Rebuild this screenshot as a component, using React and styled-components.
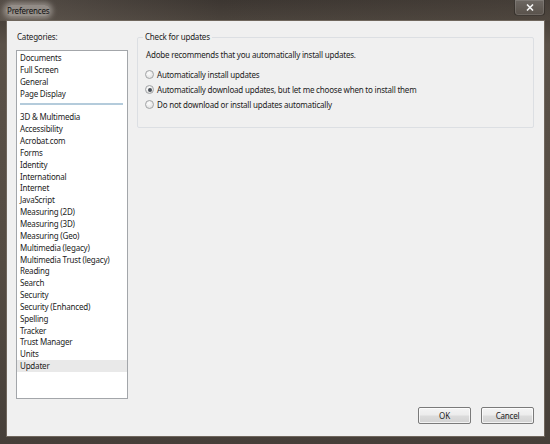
import styled, { createGlobalStyle } from "styled-components";

const GlobalStyle = createGlobalStyle`
  html, body {
    margin: 0;
    padding: 0;
    background: #3b3530;
  }
  * {
    box-sizing: border-box;
  }
`;

const uiFont = `"Noto Sans", "Open Sans", "DejaVu Sans", sans-serif`;

const Window = styled.div`
  width: 550px;
  height: 444px;
  display: flex;
  flex-direction: column;
  background: linear-gradient(to bottom, #3c3631 0%, #5a5148 10%, #544b42 60%, #463f39 100%);
  font-family: ${uiFont};
  font-size: 8px;
  letter-spacing: -0.2px;
  color: #1c1c1c;
`;

const TitleBar = styled.div`
  height: 21px;
  display: flex;
  align-items: flex-start;
  justify-content: space-between;
  padding: 0 5px 0 6px;
  background: linear-gradient(to right, rgba(130, 120, 110, 0.35), rgba(0, 0, 0, 0) 40%, rgba(90, 80, 70, 0.3));
`;

const Title = styled.div`
  margin-top: 5px;
  padding: 0 1px;
  line-height: 11px;
  color: #111;
  background: rgba(225, 220, 214, 0.45);
  border-radius: 6px;
  box-shadow: 0 0 5px 3px rgba(225, 220, 214, 0.4);
`;

const CloseButton = styled.div`
  width: 31px;
  height: 16px;
  display: flex;
  align-items: center;
  justify-content: center;
  border: 1px solid rgba(30, 25, 20, 0.6);
  border-top: none;
  border-radius: 0 0 4px 4px;
  background: linear-gradient(to bottom, rgba(255, 255, 255, 0.22), rgba(255, 255, 255, 0.08));
  box-shadow: inset 0 0 0 1px rgba(255, 255, 255, 0.12);
`;

const Client = styled.div`
  flex: 1;
  margin: 0 6px 8px 7px;
  display: flex;
  flex-direction: column;
  padding: 10px 10px 12px 9px;
  background: #f0f0f0;
  box-shadow: 0 0 0 1px #6f665d;
`;

const Body = styled.div`
  flex: 1;
  display: flex;
  gap: 9px;
  min-height: 0;
`;

const Sidebar = styled.div`
  width: 112px;
  display: flex;
  flex-direction: column;
`;

const Label = styled.div`
  line-height: 12px;
  padding-left: 1px;
  margin-bottom: 7px;
`;

const ListBox = styled.div`
  flex: 1;
  border: 1px solid #a3a6aa;
  background: #fff;
  padding: 1px 0;
`;

const Item = styled.div`
  height: 11.85px;
  line-height: 11.85px;
  padding-left: 3px;
  white-space: nowrap;
  background: ${(p) => (p.$selected ? "#e9e9e9" : "transparent")};
`;

const Separator = styled.div`
  height: 2px;
  margin: 4px 4px 6px 3px;
  background: #b4cbdb;
`;

const Main = styled.div`
  flex: 1;
`;

const Group = styled.fieldset`
  margin: 0;
  height: 97px;
  padding: 0 7px 0 7px;
  border: 1px solid #dcdfe3;
  border-radius: 2px;
`;

const Legend = styled.legend`
  margin-left: -2px;
  padding: 0 2px;
  line-height: 12px;
`;

const Note = styled.div`
  line-height: 12px;
  margin-top: 6px;
  margin-bottom: 6px;
  padding-left: 1px;
`;

const Option = styled.div`
  display: flex;
  align-items: center;
  gap: 3px;
  height: 15px;
`;

const Radio = styled.span`
  width: 9px;
  height: 9px;
  border-radius: 50%;
  border: 1px solid #a2a4a6;
  background: radial-gradient(circle at 40% 35%, #fdfdfd 0%, #e4e4e4 70%);
  display: flex;
  align-items: center;
  justify-content: center;
  &::after {
    content: "";
    width: 4px;
    height: 4px;
    border-radius: 50%;
    background: ${(p) => (p.$checked ? "#4a5058" : "transparent")};
  }
`;

const Footer = styled.div`
  display: flex;
  justify-content: flex-end;
  gap: 10px;
  margin-top: 8px;
`;

const Button = styled.div`
  width: 53px;
  height: 17px;
  display: flex;
  align-items: center;
  justify-content: center;
  border: 1px solid #7a7a7a;
  border-radius: 2px;
  background: linear-gradient(to bottom, #f4f4f4 0%, #ececec 48%, #dcdcdc 52%, #d2d2d2 100%);
  box-shadow: inset 0 0 0 1px rgba(255, 255, 255, 0.7);
`;

const topItems = ["Documents", "Full Screen", "General", "Page Display"];

const items = [
  "3D & Multimedia",
  "Accessibility",
  "Acrobat.com",
  "Forms",
  "Identity",
  "International",
  "Internet",
  "JavaScript",
  "Measuring (2D)",
  "Measuring (3D)",
  "Measuring (Geo)",
  "Multimedia (legacy)",
  "Multimedia Trust (legacy)",
  "Reading",
  "Search",
  "Security",
  "Security (Enhanced)",
  "Spelling",
  "Tracker",
  "Trust Manager",
  "Units",
  "Updater",
];

const options = [
  { label: "Automatically install updates", checked: false },
  { label: "Automatically download updates, but let me choose when to install them", checked: true },
  { label: "Do not download or install updates automatically", checked: false },
];

export default function App() {
  return (
    <>
      <GlobalStyle />
      <Window>
        <TitleBar>
          <Title>Preferences</Title>
          <CloseButton>
            <svg width="8" height="7" viewBox="0 0 8 7">
              <path d="M1 0.5 L7 6.5 M7 0.5 L1 6.5" stroke="#f4f4f4" strokeWidth="1.6" />
            </svg>
          </CloseButton>
        </TitleBar>
        <Client>
          <Body>
            <Sidebar>
              <Label>Categories:</Label>
              <ListBox>
                {topItems.map((t) => (
                  <Item key={t}>{t}</Item>
                ))}
                <Separator />
                {items.map((t) => (
                  <Item key={t} $selected={t === "Updater"}>
                    {t}
                  </Item>
                ))}
              </ListBox>
            </Sidebar>
            <Main>
              <Group>
                <Legend>Check for updates</Legend>
                <Note>Adobe recommends that you automatically install updates.</Note>
                {options.map((o) => (
                  <Option key={o.label}>
                    <Radio $checked={o.checked} />
                    {o.label}
                  </Option>
                ))}
              </Group>
            </Main>
          </Body>
          <Footer>
            <Button>OK</Button>
            <Button>Cancel</Button>
          </Footer>
        </Client>
      </Window>
    </>
  );
}
